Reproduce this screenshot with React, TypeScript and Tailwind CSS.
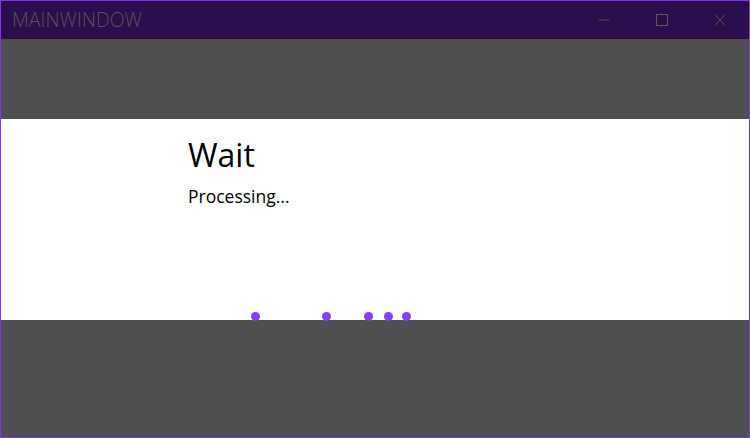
import { Minus, X } from "lucide-react";

const dots = [255, 326, 368, 388, 406];

export default function App() {
  return (
    <div
      className="w-[750px] h-[438px] border border-[#8236f4] bg-[#4f4f4f] flex flex-col overflow-hidden"
      style={{ fontFamily: '"Open Sans", "Noto Sans", sans-serif' }}
    >
      <div className="h-[38px] shrink-0 bg-[#2a0f4c] flex items-center justify-between">
        <span className="pl-[11px] text-[19.5px] font-light text-[#555] tracking-[0px]">MAINWINDOW</span>
        <div className="flex h-full">
          <button className="w-[58px] h-full flex items-center justify-center text-[#5a5a5a]">
            <Minus className="w-[16px] h-[16px]" strokeWidth={1.2} absoluteStrokeWidth />
          </button>
          <button className="w-[58px] h-full flex items-center justify-center text-[#5a5a5a]">
            <svg width="12" height="12" viewBox="0 0 12 12">
              <rect x="0.5" y="0.5" width="11" height="11" fill="none" stroke="currentColor" strokeWidth="1" />
            </svg>
          </button>
          <button className="w-[58px] h-full flex items-center justify-center text-[#5a5a5a]">
            <X className="w-[20px] h-[20px]" strokeWidth={1} absoluteStrokeWidth />
          </button>
        </div>
      </div>
      <div className="h-[80px] shrink-0" />
      <div className="h-[201px] shrink-0 bg-white relative">
        <div className="pl-[187px] pt-[15px]">
          <div className="text-[32px] leading-[42px] text-black">Wait</div>
          <div className="mt-[8px] text-[17.5px] leading-[24px] text-black">Processing...</div>
        </div>
        {dots.map((x) => (
          <span
            key={x}
            className="absolute w-[9px] h-[9px] rounded-full bg-[#8a3cfb] top-[193px]"
            style={{ left: x - 5 }}
          />
        ))}
      </div>
      <div className="flex-1" />
    </div>
  );
}
